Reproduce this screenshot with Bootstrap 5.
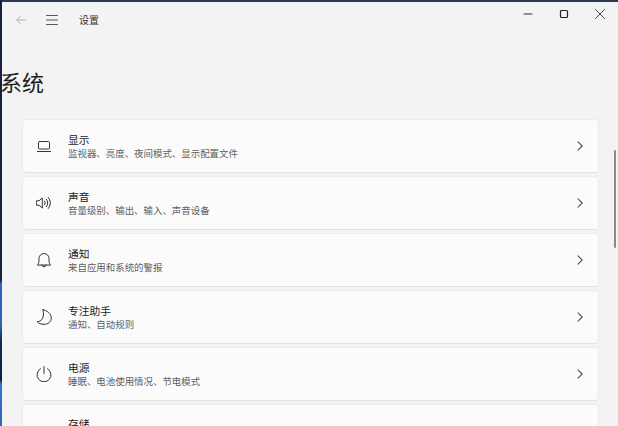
<!DOCTYPE html>
<html lang="zh-CN">
<head>
<meta charset="utf-8">
<title>设置</title>
<link href="https://cdn.jsdelivr.net/npm/bootstrap@5.3.0/dist/css/bootstrap.min.css" rel="stylesheet">
<style>
html,body{height:426px;overflow:hidden;}
body{background:linear-gradient(180deg,#16233c 0,#16233c 280px,#2f63b8 284px,#2f63b8 325px,#142a52 340px,#101f3c 380px,#3a74c8 384px,#2f63b8 426px);font-family:"Noto Sans CJK SC","Liberation Sans",sans-serif;color:#1b1b1b;}
.win-frame{height:426px;margin-left:2px;padding-top:2px;background:#f3f3f3;position:relative;overflow:hidden;}
.top-line{height:2px;background:#2b3a50;position:absolute;left:0;right:0;top:0;}
.title-bar{height:36px;padding-left:14px;padding-right:8px;}
.nav-back{width:10px;height:10px;margin-right:20px;}
.nav-menu{width:12px;height:12px;margin-right:21px;}
.app-name{font-size:10px;color:#333;line-height:14px;}
.win-btns{position:absolute;top:0;right:0;height:28px;}
.win-btn{width:36px;height:28px;}
.page-title{font-size:22px;line-height:30px;font-weight:400;margin:28px 0 23px -2px;color:#1f1f1f;white-space:nowrap;}
.setting-list{margin-left:20px;width:577px;gap:3px;}
.setting-row{height:54px;background:#fbfbfb;border:1px solid #ececec;border-bottom-color:#e2e2e2;border-radius:4px;padding-left:13px;padding-right:15px;}
.row-ico{width:16px;height:16px;margin-right:16px;flex:none;}
.row-name{font-size:10.75px;line-height:14px;color:#1b1b1b;}
.row-desc{font-size:9.45px;line-height:13px;color:#5f5f5f;}
.store-row{padding-top:12px;padding-left:45px;}
.chev{width:6px;height:10px;margin-left:auto;}
.scroll-thumb{position:absolute;right:2px;top:150px;width:2px;height:98px;border-radius:1px;background:#8a8a8a;}
svg{display:block;fill:none;stroke-linecap:round;stroke-linejoin:round;}
</style>
</head>
<body>
<div class="win-frame">
<div class="top-line"></div>
<div class="title-bar d-flex align-items-center">
<svg class="nav-back" viewBox="0 0 10 10" stroke="#b5b5b5" stroke-width="1"><path d="M9.500 5H.7M4.500 1.200.7 5l3.800 3.800"/></svg>
<svg class="nav-menu" viewBox="0 0 12 12" stroke="#555" stroke-width="1"><path d="M.5 1.500H11.500M.5 6H11.500M.5 10.500H11.500"/></svg>
<span class="app-name">设置</span>
</div>
<div class="win-btns d-flex">
<div class="win-btn d-flex align-items-center justify-content-center"><svg width="10" height="10" viewBox="0 0 10 10" stroke="#333" stroke-width="1"><path d="M1 5H9"/></svg></div>
<div class="win-btn d-flex align-items-center justify-content-center"><svg width="10" height="10" viewBox="0 0 10 10" stroke="#222" stroke-width="1.200"><rect x="1.500" y="1.500" width="7" height="7" rx="1"/></svg></div>
<div class="win-btn d-flex align-items-center justify-content-center"><svg width="10" height="10" viewBox="0 0 10 10" stroke="#444" stroke-width="1"><path d="M.5 .5 9.500 9.500M9.500 .5 .5 9.500"/></svg></div>
</div>
<h1 class="page-title">系统</h1>
<div class="setting-list d-flex flex-column">
<div class="setting-row d-flex align-items-center">
<svg class="row-ico" viewBox="0 0 16 16" stroke="#333" stroke-width="1"><rect x="2.500" y="3.500" width="11" height="7.500" rx="1"/><path d="M1.500 13.500H14.500"/></svg>
<div><div class="row-name">显示</div><div class="row-desc">监视器、亮度、夜间模式、显示配置文件</div></div>
<svg class="chev" viewBox="0 0 6 10" stroke="#555" stroke-width="1.100"><path d="M1 .8 5.200 5 1 9.200"/></svg>
</div>
<div class="setting-row d-flex align-items-center">
<svg class="row-ico" viewBox="0 0 16 16" stroke="#333" stroke-width="1"><path d="M.7 5.800H3L6.300 3V13L3 10.200H.7Z"/><path d="M8.500 6a3 3 0 0 1 0 4M10.300 4.200a5.500 5.500 0 0 1 0 7.600M12.300 2.500a8 8 0 0 1 0 11"/></svg>
<div><div class="row-name">声音</div><div class="row-desc">音量级别、输出、输入、声音设备</div></div>
<svg class="chev" viewBox="0 0 6 10" stroke="#555" stroke-width="1.100"><path d="M1 .8 5.200 5 1 9.200"/></svg>
</div>
<div class="setting-row d-flex align-items-center">
<svg class="row-ico" viewBox="0 0 16 16" stroke="#333" stroke-width="1"><path d="M1.700 12.800C3 11.500 3 9.500 3 6.500a5 5 0 0 1 10 0C13 9.500 13 11.500 14.300 12.800Z"/><path d="M6 12.800a2 2 0 0 0 4 0"/></svg>
<div><div class="row-name">通知</div><div class="row-desc">来自应用和系统的警报</div></div>
<svg class="chev" viewBox="0 0 6 10" stroke="#555" stroke-width="1.100"><path d="M1 .8 5.200 5 1 9.200"/></svg>
</div>
<div class="setting-row d-flex align-items-center">
<svg class="row-ico" viewBox="0 0 16 16" stroke="#333" stroke-width="1"><path d="M7 .7C11 1.500 15.300 4.500 15.300 9C15.300 13 12 15.300 8 15.300C5 15.300 2.500 14.500 1 12.500C5 13 9 9 7 .7Z"/></svg>
<div><div class="row-name">专注助手</div><div class="row-desc">通知、自动规则</div></div>
<svg class="chev" viewBox="0 0 6 10" stroke="#555" stroke-width="1.100"><path d="M1 .8 5.200 5 1 9.200"/></svg>
</div>
<div class="setting-row d-flex align-items-center">
<svg class="row-ico" viewBox="0 0 16 16" stroke="#333" stroke-width="1"><path d="M8 .7V7.500M4.500 2.700a7 7 0 1 0 7 0"/></svg>
<div><div class="row-name">电源</div><div class="row-desc">睡眠、电池使用情况、节电模式</div></div>
<svg class="chev" viewBox="0 0 6 10" stroke="#555" stroke-width="1.100"><path d="M1 .8 5.200 5 1 9.200"/></svg>
</div>
<div class="setting-row d-flex align-items-start store-row">
<div class="row-name">存储</div>
</div>
</div>
<div class="scroll-thumb"></div>
</div>
<script src="https://cdn.jsdelivr.net/npm/bootstrap@5.3.0/dist/js/bootstrap.bundle.min.js"></script>
</body>
</html>
